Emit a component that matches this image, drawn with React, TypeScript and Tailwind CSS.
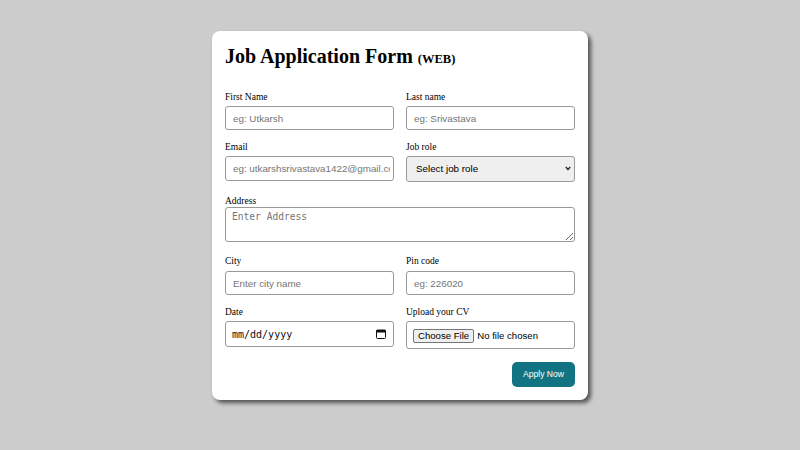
import React from 'react';

const labelCls = "block text-[9.5px] leading-[12px] text-black font-['Liberation_Serif',serif]";
const inputCls =
  "block w-full rounded-[3px] border border-[#999] bg-white pl-[7px] pr-[3px] text-[9.8px] text-black font-['Liberation_Sans',Arial,sans-serif] placeholder:text-[#757575] outline-none";

export default function App() {
  return (
    <div className="min-h-screen w-full bg-[#cccccc] flex justify-center pt-[31px]">
      <form
        className="w-[376px] h-[369px] rounded-[8px] bg-white px-[13px] pt-[13px] shadow-[3px_3px_4px_rgba(0,0,0,0.6)]"
        onSubmit={e => e.preventDefault()}
      >
        {/* Title */}
        <h1 className="text-[20px] leading-[24px] font-bold text-black font-['Liberation_Serif',serif]">
          Job Application Form <span className="text-[12.5px]">(WEB)</span>
        </h1>

        {/* Row 1 */}
        <div className="mt-[20px] grid grid-cols-2 gap-x-[12px]">
          <div>
            <label className={labelCls}>First Name</label>
            <input type="text" placeholder="eg: Utkarsh" className={`${inputCls} mt-[3px] h-[24px]`} />
          </div>
          <div>
            <label className={labelCls}>Last name</label>
            <input type="text" placeholder="eg: Srivastava" className={`${inputCls} mt-[3px] h-[24px]`} />
          </div>
        </div>

        {/* Row 2 */}
        <div className="mt-[11px] grid grid-cols-2 gap-x-[12px]">
          <div>
            <label className={labelCls}>Email</label>
            <input
              type="email"
              placeholder="eg: utkarshsrivastava1422@gmail.com"
              className={`${inputCls} mt-[3px] h-[25px]`}
            />
          </div>
          <div>
            <label className={labelCls}>Job role</label>
            <div className="relative mt-[3px]">
              <select
                defaultValue=""
                className="block h-[26px] w-full appearance-none rounded-[3px] border border-[#999] bg-[#efefef] pl-[9px] pr-[16px] text-[9.8px] text-black font-['Liberation_Sans',Arial,sans-serif] outline-none"
              >
                <option value="">Select job role</option>
                <option value="fe">Frontend Developer</option>
                <option value="be">Backend Developer</option>
                <option value="fs">Full Stack Developer</option>
              </select>
              <svg
                className="pointer-events-none absolute right-[4px] top-[10px]"
                width="6"
                height="5"
                viewBox="0 0 6 5"
              >
                <path d="M0.8 1 L3 3.4 L5.2 1" fill="none" stroke="#222" strokeWidth="1.4" />
              </svg>
            </div>
          </div>
        </div>

        {/* Address */}
        <div className="mt-[13px]">
          <label className={labelCls}>Address</label>
          <textarea
            placeholder="Enter Address"
            className="block h-[35px] w-full rounded-[3px] border border-[#999] bg-white px-[6px] py-[3px] text-[9.6px] leading-[12px] text-black font-['DejaVu_Sans_Mono',monospace] placeholder:text-[#757575] outline-none"
          />
        </div>

        {/* Row 4 */}
        <div className="mt-[13px] grid grid-cols-2 gap-x-[12px]">
          <div>
            <label className={labelCls}>City</label>
            <input type="text" placeholder="Enter city name" className={`${inputCls} mt-[4px] h-[24px]`} />
          </div>
          <div>
            <label className={labelCls}>Pin code</label>
            <input type="text" placeholder="eg: 226020" className={`${inputCls} mt-[4px] h-[24px]`} />
          </div>
        </div>

        {/* Row 5 */}
        <div className="mt-[11px] grid grid-cols-2 gap-x-[12px]">
          <div>
            <label className={labelCls}>Date</label>
            <div className="relative mt-[3px]">
              <input
                type="text"
                placeholder="mm/dd/yyyy"
                className="block h-[26px] w-full rounded-[3px] border border-[#999] bg-white px-[6px] pr-[20px] text-[10px] text-black font-['DejaVu_Sans_Mono',monospace] placeholder:text-[#111] outline-none"
              />
              <svg
                className="pointer-events-none absolute right-[8px] top-[8px]"
                width="10"
                height="10"
                viewBox="0 0 10 10"
              >
                <rect x="0.5" y="1" width="9" height="8.5" rx="1" fill="none" stroke="#111" strokeWidth="1" />
                <rect x="0.5" y="1" width="9" height="2.5" fill="#111" />
              </svg>
            </div>
          </div>
          <div>
            <label className={labelCls}>Upload your CV</label>
            <input
              type="file"
              className="mt-[3px] block h-[28px] w-full rounded-[3px] border border-[#999] bg-white px-[6px] py-[7px] text-[9.6px] leading-[12px] text-black font-['Liberation_Sans',Arial,sans-serif] file:mr-[3px] file:rounded-[2px] file:border file:border-[#767676] file:bg-[#efefef] file:px-[4px] file:py-0 file:text-[9.6px] file:leading-[12px]"
            />
          </div>
        </div>

        {/* Submit */}
        <div className="mt-[13px] flex justify-end">
          <button
            type="submit"
            className="h-[25px] w-[63px] rounded-[5px] bg-[#127482] text-[8.6px] text-white font-['Liberation_Sans',Arial,sans-serif]"
          >
            Apply Now
          </button>
        </div>
      </form>
    </div>
  );
}
